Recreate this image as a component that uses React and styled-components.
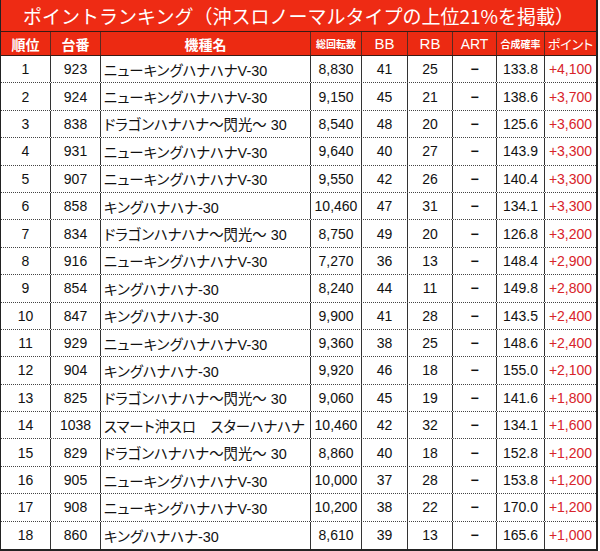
import React from "react";
import styled, { createGlobalStyle } from "styled-components";

const Global = createGlobalStyle`
  html, body { margin: 0; padding: 0; background: #fff; }
  body { font-family: "Liberation Sans", "Noto Sans CJK JP", sans-serif; }
`;

const COLS = "50px 50px 210px 51px 46px 45px 44px 48px 1fr";

const Table = styled.div`
  width: 598px;
  border-left: 1px solid #222;
  border-right: 2px solid #222;
  border-bottom: 2px solid #222;
  box-sizing: border-box;
`;

const Title = styled.div`
  height: 32px;
  box-sizing: border-box;
  background: #ee2b14;
  border-bottom: 1px solid #3a1a14;
  color: #fff;
  font-family: "Noto Sans CJK JP", sans-serif;
  font-size: 19px;
  line-height: 31px;
  text-align: center;
  white-space: nowrap;
`;

const Row = styled.div`
  display: grid;
  grid-template-columns: ${COLS};
  height: ${(p) => (p.$head ? "24px" : "27.4px")};
  box-sizing: border-box;
  background: ${(p) => (p.$head ? "#ec2a12" : "#fff")};
  border-bottom: ${(p) =>
    p.$head ? "1px solid #3a1a14" : p.$last ? "none" : "1px dotted #444"};
`;

const HeadCell = styled.div`
  display: flex;
  align-items: center;
  justify-content: center;
  border-right: 1px solid #5a2a20;
  color: #fff;
  font-family: ${(p) =>
    p.$latin ? `"Liberation Sans", sans-serif` : `"Noto Sans CJK JP", sans-serif`};
  font-size: ${(p) => p.$size || 14}px;
  font-weight: ${(p) => (p.$bold ? 700 : 400)};
  font-feature-settings: "palt";
  white-space: nowrap;
  &:last-child { border-right: none; }
`;

const Cell = styled.div`
  display: flex;
  align-items: center;
  justify-content: ${(p) => (p.$left ? "flex-start" : "center")};
  padding-left: ${(p) => (p.$left ? "3px" : "0")};
  border-right: 1px solid #333;
  color: ${(p) => (p.$red ? "#d8232a" : "#111")};
  font-size: ${(p) => (p.$left ? "14.4px" : "14px")};
  font-weight: ${(p) => (p.$bold ? 700 : 400)};
  font-feature-settings: ${(p) => (p.$left ? `"palt"` : "normal")};
  white-space: nowrap;
  overflow: hidden;
  &:last-child { border-right: none; }
`;

const rows = [
  [1, 923, "ニューキングハナハナV-30", "8,830", 41, 25, "133.8", "+4,100"],
  [2, 924, "ニューキングハナハナV-30", "9,150", 45, 21, "138.6", "+3,700"],
  [3, 838, "ドラゴンハナハナ～閃光～ 30", "8,540", 48, 20, "125.6", "+3,600"],
  [4, 931, "ニューキングハナハナV-30", "9,640", 40, 27, "143.9", "+3,300"],
  [5, 907, "ニューキングハナハナV-30", "9,550", 42, 26, "140.4", "+3,300"],
  [6, 858, "キングハナハナ-30", "10,460", 47, 31, "134.1", "+3,300"],
  [7, 834, "ドラゴンハナハナ～閃光～ 30", "8,750", 49, 20, "126.8", "+3,200"],
  [8, 916, "ニューキングハナハナV-30", "7,270", 36, 13, "148.4", "+2,900"],
  [9, 854, "キングハナハナ-30", "8,240", 44, 11, "149.8", "+2,800"],
  [10, 847, "キングハナハナ-30", "9,900", 41, 28, "143.5", "+2,400"],
  [11, 929, "ニューキングハナハナV-30", "9,360", 38, 25, "148.6", "+2,400"],
  [12, 904, "キングハナハナ-30", "9,920", 46, 18, "155.0", "+2,100"],
  [13, 825, "ドラゴンハナハナ～閃光～ 30", "9,060", 45, 19, "141.6", "+1,800"],
  [14, 1038, "スマート沖スロ　スターハナハナ", "10,460", 42, 32, "134.1", "+1,600"],
  [15, 829, "ドラゴンハナハナ～閃光～ 30", "8,860", 40, 18, "152.8", "+1,200"],
  [16, 905, "ニューキングハナハナV-30", "10,000", 37, 28, "153.8", "+1,200"],
  [17, 908, "ニューキングハナハナV-30", "10,200", 38, 22, "170.0", "+1,200"],
  [18, 860, "キングハナハナ-30", "8,610", 39, 13, "165.6", "+1,000"],
];

export default function App() {
  return (
    <>
      <Global />
      <Table>
        <Title>ポイントランキング（沖スロノーマルタイプの上位21%を掲載）</Title>
        <Row $head>
          <HeadCell $bold>順位</HeadCell>
          <HeadCell $bold>台番</HeadCell>
          <HeadCell $bold>機種名</HeadCell>
          <HeadCell $bold $size={10}>総回転数</HeadCell>
          <HeadCell $latin $size={15}>BB</HeadCell>
          <HeadCell $latin $size={15}>RB</HeadCell>
          <HeadCell $latin $size={14}>ART</HeadCell>
          <HeadCell $bold $size={10}>合成確率</HeadCell>
          <HeadCell $size={13}>ポイント</HeadCell>
        </Row>
        {rows.map((r, i) => (
          <Row key={r[0]} $last={i === rows.length - 1}>
            <Cell>{r[0]}</Cell>
            <Cell>{r[1]}</Cell>
            <Cell $left>{r[2]}</Cell>
            <Cell>{r[3]}</Cell>
            <Cell>{r[4]}</Cell>
            <Cell>{r[5]}</Cell>
            <Cell $bold>−</Cell>
            <Cell>{r[6]}</Cell>
            <Cell $red>{r[7]}</Cell>
          </Row>
        ))}
      </Table>
    </>
  );
}
